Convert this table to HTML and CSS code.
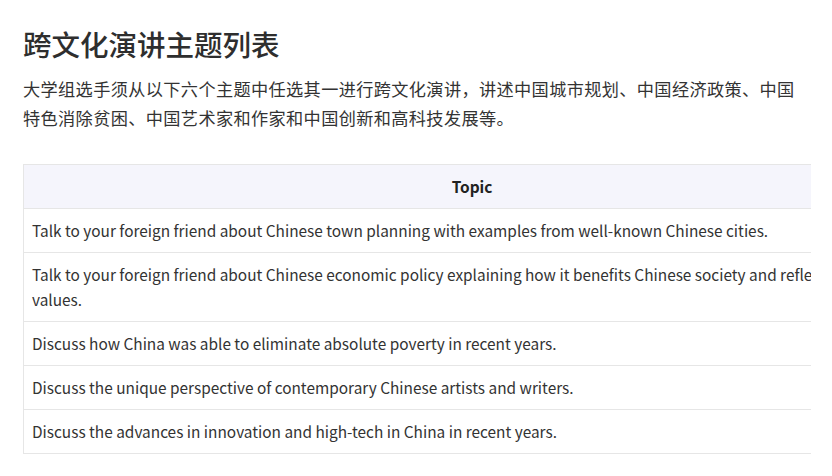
FILE: index.html
```html
<!doctype html>
<html lang="zh">
  <head>
    <meta charset="UTF-8" />
    <meta name="viewport" content="width=device-width, initial-scale=1.0" />
    <title>跨文化演讲主题列表</title>
    <link rel="stylesheet" href="styles.css">
  </head>
  <body>
    <div class="page">
      <h1>跨文化演讲主题列表</h1>
      <p class="intro">
        大学组选手须从以下六个主题中任选其一进行跨文化演讲，讲述中国城市规划、中国经济政策、中国特色消除贫困、中国艺术家和作家和中国创新和高科技发展等。
      </p>
      <div class="table-wrap">
        <table class="topics">
          <thead>
            <tr>
              <th>Topic</th>
            </tr>
          </thead>
          <tbody>
            <tr>
              <td>Talk to your foreign friend about Chinese town planning with examples from well-known Chinese cities.</td>
            </tr>
            <tr>
              <td>Talk to your foreign friend about Chinese economic policy explaining how it benefits Chinese society and reflects Chinese values.</td>
            </tr>
            <tr>
              <td>Discuss how China was able to eliminate absolute poverty in recent years.</td>
            </tr>
            <tr>
              <td>Discuss the unique perspective of contemporary Chinese artists and writers.</td>
            </tr>
            <tr>
              <td>Discuss the advances in innovation and high-tech in China in recent years.</td>
            </tr>
          </tbody>
        </table>
      </div>
    </div>
  </body>
</html>
```

FILE: styles.css
```css
body {
  margin: 0;
  background-color: #fff;
  color: #333;
  font-family: "Noto Sans CJK SC", "Noto Sans", sans-serif;
}

.page {
  padding: 27px 21px 0 23px;
}

h1 {
  margin: 0 0 13px;
  font-size: 28.5px;
  line-height: 34px;
  font-weight: 500;
  color: #2e2e2e;
}

.intro {
  margin: 0 0 32px;
  font-size: 17.2px;
  line-height: 29px;
  letter-spacing: 0.35px;
  color: #333;
}

.table-wrap {
  overflow: hidden;
}

.topics {
  width: 898px;
  border-collapse: collapse;
  font-size: 15.4px;
  line-height: 25px;
}

.topics th,
.topics td {
  border: 1px solid #e6e6e6;
  padding: 9px 8px;
  text-align: left;
}

.topics th {
  background-color: #f5f5fc;
  text-align: center;
  font-weight: 700;
  color: #222;
}

.topics td {
  color: #333;
}
```
